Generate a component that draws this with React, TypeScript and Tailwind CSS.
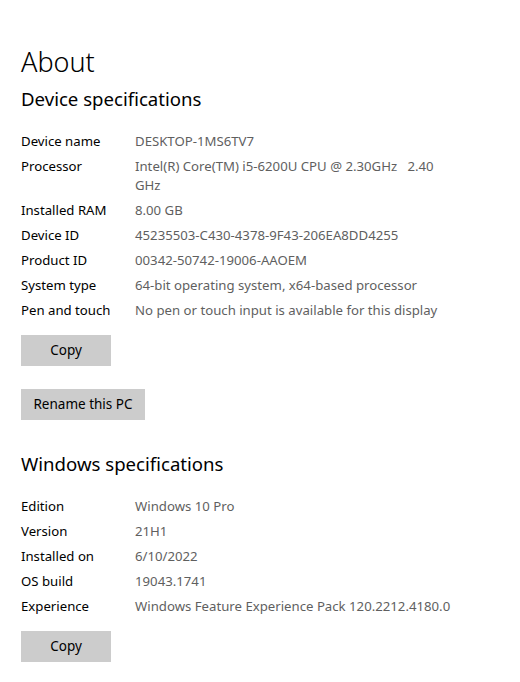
const font = { fontFamily: '"Noto Sans", "Open Sans", sans-serif' };

type Spec = [string, string];

const device: Spec[] = [
  ['Device name', 'DESKTOP-1MS6TV7'],
  ['Processor', 'Intel(R) Core(TM) i5-6200U CPU @ 2.30GHz   2.40 GHz'],
  ['Installed RAM', '8.00 GB'],
  ['Device ID', '45235503-C430-4378-9F43-206EA8DD4255'],
  ['Product ID', '00342-50742-19006-AAOEM'],
  ['System type', '64-bit operating system, x64-based processor'],
  ['Pen and touch', 'No pen or touch input is available for this display'],
];

const windows: Spec[] = [
  ['Edition', 'Windows 10 Pro'],
  ['Version', '21H1'],
  ['Installed on', '6/10/2022'],
  ['OS build', '19043.1741'],
  ['Experience', 'Windows Feature Experience Pack 120.2212.4180.0'],
];

function SpecList({ items }: { items: Spec[] }) {
  return (
    <div className="flex flex-col gap-[6px]">
      {items.map(([label, value]) => (
        <div key={label} className="flex text-[13.2px] leading-[19px]">
          <div className="w-[114px] shrink-0 text-black">{label}</div>
          <div className="w-[318px] text-[#5f5f5f] whitespace-pre-wrap">{value}</div>
        </div>
      ))}
    </div>
  );
}

function Button({ children, width }: { children: string; width: string }) {
  return (
    <button className={`h-[31px] ${width} bg-[#cccccc] text-[13.5px] text-black`}>
      {children}
    </button>
  );
}

export default function App() {
  return (
    <div className="w-[520px] h-[682px] bg-white px-[21px] pt-[44px]" style={font}>
      <h1 className="text-[27px] font-light leading-[36px] text-black">About</h1>
      <h2 className="text-[18.6px] leading-[28px] mt-[5px] text-black">Device specifications</h2>

      <div className="mt-[19px]">
        <SpecList items={device} />
      </div>

      <div className="mt-[15px] flex flex-col items-start gap-[23px]">
        <Button width="w-[90px]">Copy</Button>
        <Button width="w-[124px]">Rename this PC</Button>
      </div>

      <h2 className="text-[18.6px] leading-[28px] mt-[30px] text-black">Windows specifications</h2>

      <div className="mt-[19px]">
        <SpecList items={windows} />
      </div>

      <div className="mt-[15px]">
        <Button width="w-[90px]">Copy</Button>
      </div>
    </div>
  );
}
